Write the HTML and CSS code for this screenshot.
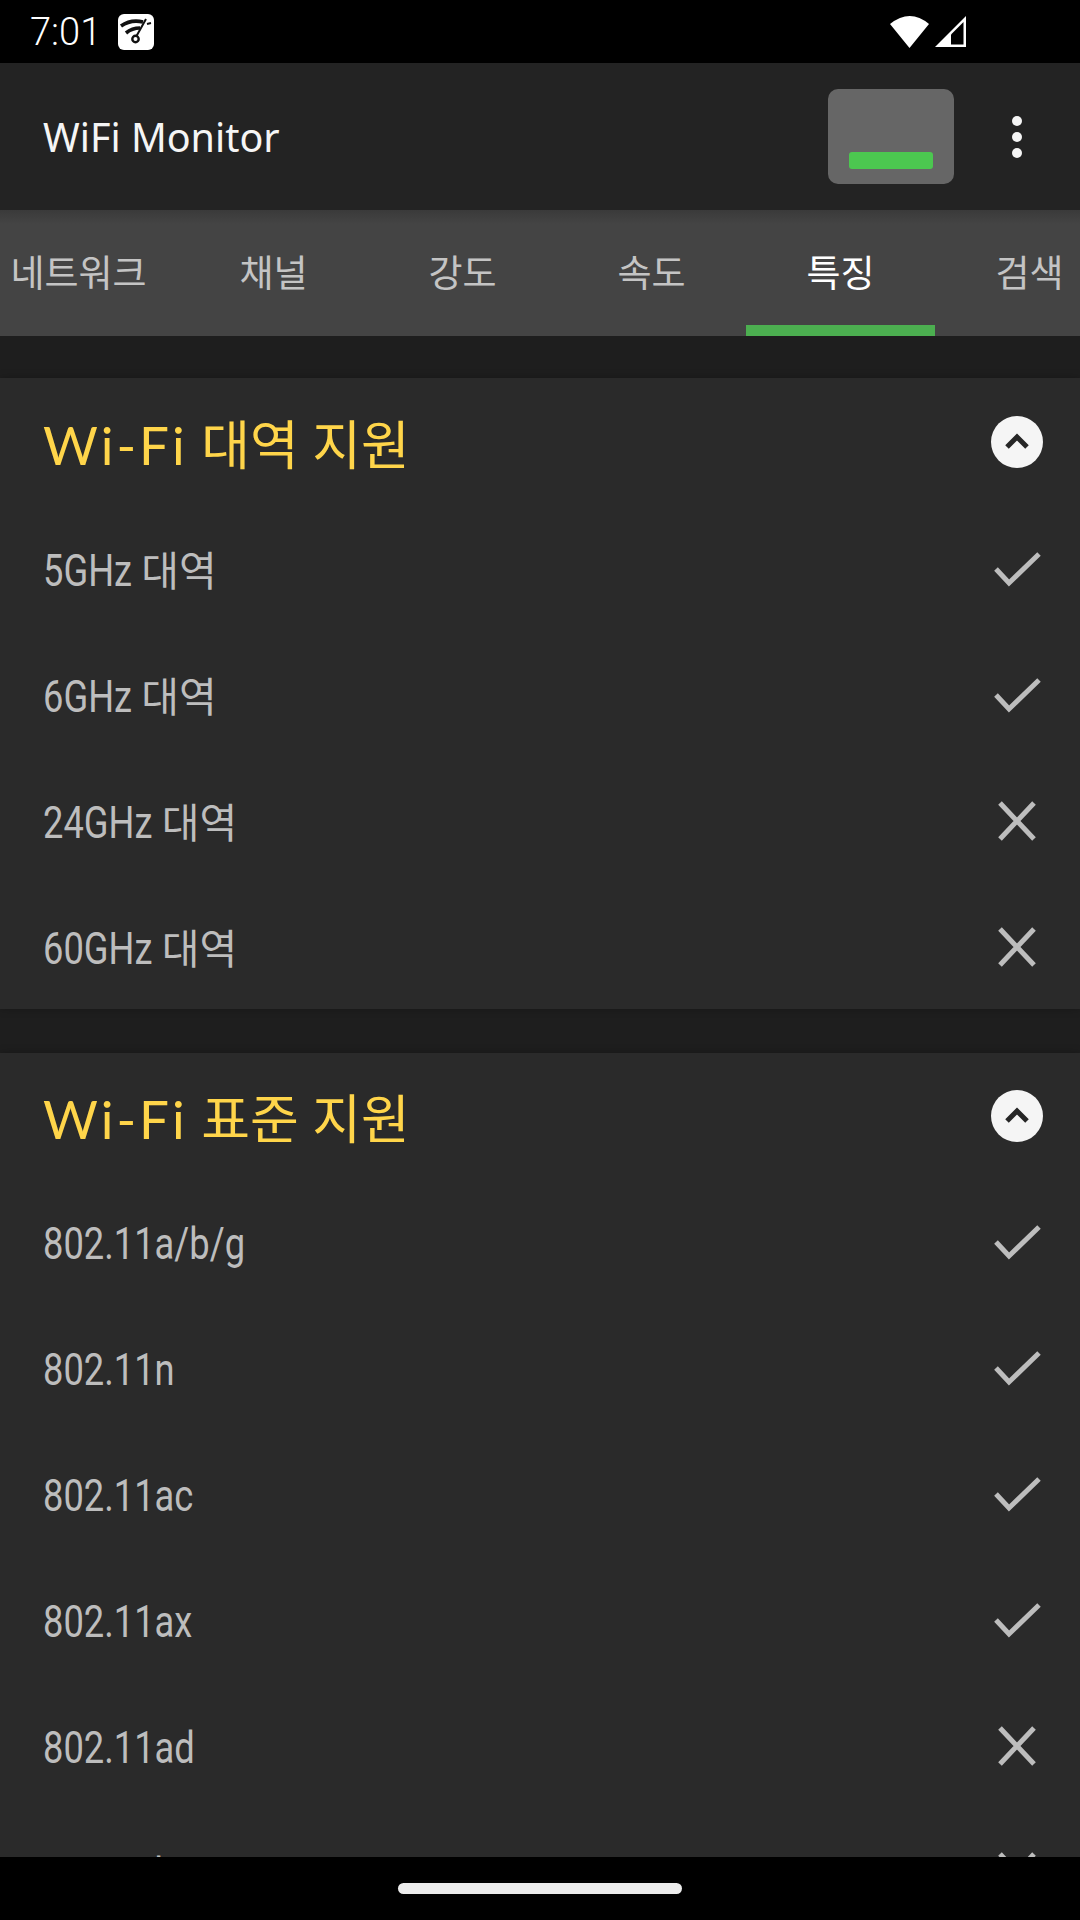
FILE: index.html
```html
<!DOCTYPE html>
<html lang="ko">
<head>
    <meta charset="UTF-8">
    <meta name="viewport" content="width=device-width, initial-scale=1.0">
    <title>WiFi Monitor</title>
    <link rel="stylesheet" href="styles.css">
</head>
<body>
    <svg class="defs" width="0" height="0">
        <symbol id="check" viewBox="0 0 48 48">
            <path d="M3 24 L16 38 L46 9" fill="none" stroke="#bdbdbd" stroke-width="5"/>
        </symbol>
        <symbol id="cross" viewBox="0 0 48 48">
            <path d="M7 6 L41 42 M41 6 L7 42" fill="none" stroke="#bdbdbd" stroke-width="5"/>
        </symbol>
        <symbol id="chevron" viewBox="0 0 52 52">
            <circle cx="26" cy="26" r="26" fill="#f5f5f5"/>
            <path d="M16 31 L26 21 L36 31" fill="none" stroke="#262626" stroke-width="5"/>
        </symbol>
    </svg>

    <div class="app">
        <div class="status-bar">
            <span class="clock">7:01</span>
            <svg class="app-badge" width="36" height="36" viewBox="0 0 36 36">
                <rect width="36" height="36" rx="6" fill="#fff"/>
                <path d="M3 12 Q13 5 25 8" fill="none" stroke="#111" stroke-width="3.6"/>
                <path d="M8 19 Q14 14 22 14" fill="none" stroke="#111" stroke-width="3.6"/>
                <circle cx="17.5" cy="25" r="3.2" fill="none" stroke="#111" stroke-width="2.4"/>
                <path d="M18.5 22 L28 5 M29 10 L33 9" fill="none" stroke="#111" stroke-width="2"/>
            </svg>
            <span class="status-spacer"></span>
            <svg width="40" height="33" viewBox="0 0 40 33">
                <path d="M0 9 Q20 -7 39 9 L19.5 33 Z" fill="#fff"/>
            </svg>
            <svg class="signal" width="33" height="33" viewBox="0 0 33 33">
                <path d="M32 1 V32 H1 Z" fill="#fff"/>
                <path d="M29.5 7 L17 19.5 V29.5 H29.5 Z" fill="#000"/>
            </svg>
        </div>

        <header class="toolbar">
            <h1>WiFi Monitor</h1>
            <div class="meter"><span class="meter-bar"></span></div>
            <div class="kebab"><span></span><span></span><span></span></div>
        </header>

        <nav class="tabs">
            <div class="tab">네트워크</div>
            <div class="tab">채널</div>
            <div class="tab">강도</div>
            <div class="tab">속도</div>
            <div class="tab active">특징</div>
            <div class="tab">검색</div>
        </nav>

        <main class="content">
            <section class="card">
                <div class="card-head">
                    <h2><span class="latin">Wi-Fi</span> 대역 지원</h2>
                    <svg class="toggle"><use href="#chevron"/></svg>
                </div>
                <div class="row"><span class="label">5GHz <span class="ko">대역</span></span><svg class="mark"><use href="#check"/></svg></div>
                <div class="row"><span class="label">6GHz <span class="ko">대역</span></span><svg class="mark"><use href="#check"/></svg></div>
                <div class="row"><span class="label">24GHz <span class="ko">대역</span></span><svg class="mark"><use href="#cross"/></svg></div>
                <div class="row"><span class="label">60GHz <span class="ko">대역</span></span><svg class="mark"><use href="#cross"/></svg></div>
            </section>

            <section class="card">
                <div class="card-head">
                    <h2><span class="latin">Wi-Fi</span> 표준 지원</h2>
                    <svg class="toggle"><use href="#chevron"/></svg>
                </div>
                <div class="row"><span class="label">802.11a/b/g</span><svg class="mark"><use href="#check"/></svg></div>
                <div class="row"><span class="label">802.11n</span><svg class="mark"><use href="#check"/></svg></div>
                <div class="row"><span class="label">802.11ac</span><svg class="mark"><use href="#check"/></svg></div>
                <div class="row"><span class="label">802.11ax</span><svg class="mark"><use href="#check"/></svg></div>
                <div class="row"><span class="label">802.11ad</span><svg class="mark"><use href="#cross"/></svg></div>
                <div class="row"><span class="label">802.11be</span><svg class="mark"><use href="#cross"/></svg></div>
            </section>
        </main>

        <div class="nav-bar"><span class="home-pill"></span></div>
    </div>
</body>
</html>
```

FILE: styles.css
```css
* {
    margin: 0;
    padding: 0;
    box-sizing: border-box;
}

body {
    font-family: Roboto, "Noto Sans CJK KR", sans-serif;
    background-color: #000;
}

.defs {
    display: block;
    height: 0;
}

.app {
    display: flex;
    flex-direction: column;
    width: 1080px;
    height: 1920px;
    overflow: hidden;
    background-color: #1e1e1e;
}

/* status bar */
.status-bar {
    flex: none;
    display: flex;
    align-items: center;
    height: 63px;
    padding: 0 113px 0 30px;
    background-color: #000;
    color: #fff;
}

.clock {
    font-size: 38px;
    font-weight: 300;
    width: 88px;
}

.app-badge {
    display: block;
}

.status-spacer {
    flex: 1;
}

.signal {
    margin-left: 4px;
}

/* toolbar */
.toolbar {
    flex: none;
    display: flex;
    align-items: center;
    height: 147px;
    padding: 0 58px 0 43px;
    background-color: #232323;
}

.toolbar h1 {
    flex: 1;
    font-family: "Noto Sans", "Noto Sans CJK KR", sans-serif;
    font-size: 39.5px;
    font-weight: 400;
    color: #f5f5f5;
}

.meter {
    display: flex;
    align-items: flex-end;
    justify-content: center;
    width: 126px;
    height: 95px;
    padding-bottom: 15px;
    margin-right: 58px;
    background-color: #666;
    border-radius: 10px;
}

.meter-bar {
    width: 84px;
    height: 17px;
    background-color: #4cc750;
    border-radius: 3px;
}

.kebab {
    display: flex;
    flex-direction: column;
    gap: 6px;
}

.kebab span {
    width: 10px;
    height: 10px;
    background-color: #f5f5f5;
    border-radius: 50%;
}

/* tabs */
.tabs {
    flex: none;
    display: flex;
    height: 126px;
    margin-left: -20px;
    background: linear-gradient(#3a3a3a, #444 14px);
    width: 1100px;
}

.tab {
    flex: none;
    width: 189px;
    height: 126px;
    padding-top: 40px;
    text-align: center;
    font-size: 37px;
    line-height: 50px;
    color: #c4c4c4;
}

.tab:first-child {
    width: 199px;
    padding-right: 2px;
}

.tab.active {
    color: #fff;
    border-bottom: 11px solid #4caf50;
}

/* cards */
.content {
    flex: 1;
    overflow: hidden;
    padding-top: 42px;
}

.card {
    background-color: #2a2a2a;
    margin-bottom: 44px;
    box-shadow: 0 0 8px rgba(0, 0, 0, 0.25);
}

.card:first-child {
    height: 631px;
}

.card-head {
    display: flex;
    align-items: center;
    justify-content: space-between;
    height: 128px;
    padding: 0 37px 0 43px;
}

.card + .card .card-head {
    height: 126px;
}

.card-head h2 {
    font-family: Lato, "Noto Sans CJK KR", sans-serif;
    font-size: 53px;
    font-weight: 400;
    color: #ffd54a;
}

.card-head .latin {
    letter-spacing: 3px;
}

.toggle {
    width: 52px;
    height: 52px;
}

.row {
    display: flex;
    align-items: center;
    justify-content: space-between;
    height: 126px;
    padding: 0 39px 0 43px;
    font-size: 44px;
    line-height: 52px;
    color: #bdbdbd;
}

/* no condensed face installed, so squeeze Roboto */
.label {
    display: inline-block;
    padding-top: 3px;
    transform: scaleX(0.825);
    transform-origin: left center;
}

.label .ko {
    display: inline-block;
    font-size: 41px;
    line-height: 1;
    transform: scaleX(1.212);
    transform-origin: left center;
}

.mark {
    width: 48px;
    height: 48px;
}

/* gesture bar */
.nav-bar {
    flex: none;
    display: flex;
    align-items: center;
    justify-content: center;
    height: 63px;
    background-color: #000;
}

.home-pill {
    width: 284px;
    height: 11px;
    background-color: #ececec;
    border-radius: 6px;
}
```
